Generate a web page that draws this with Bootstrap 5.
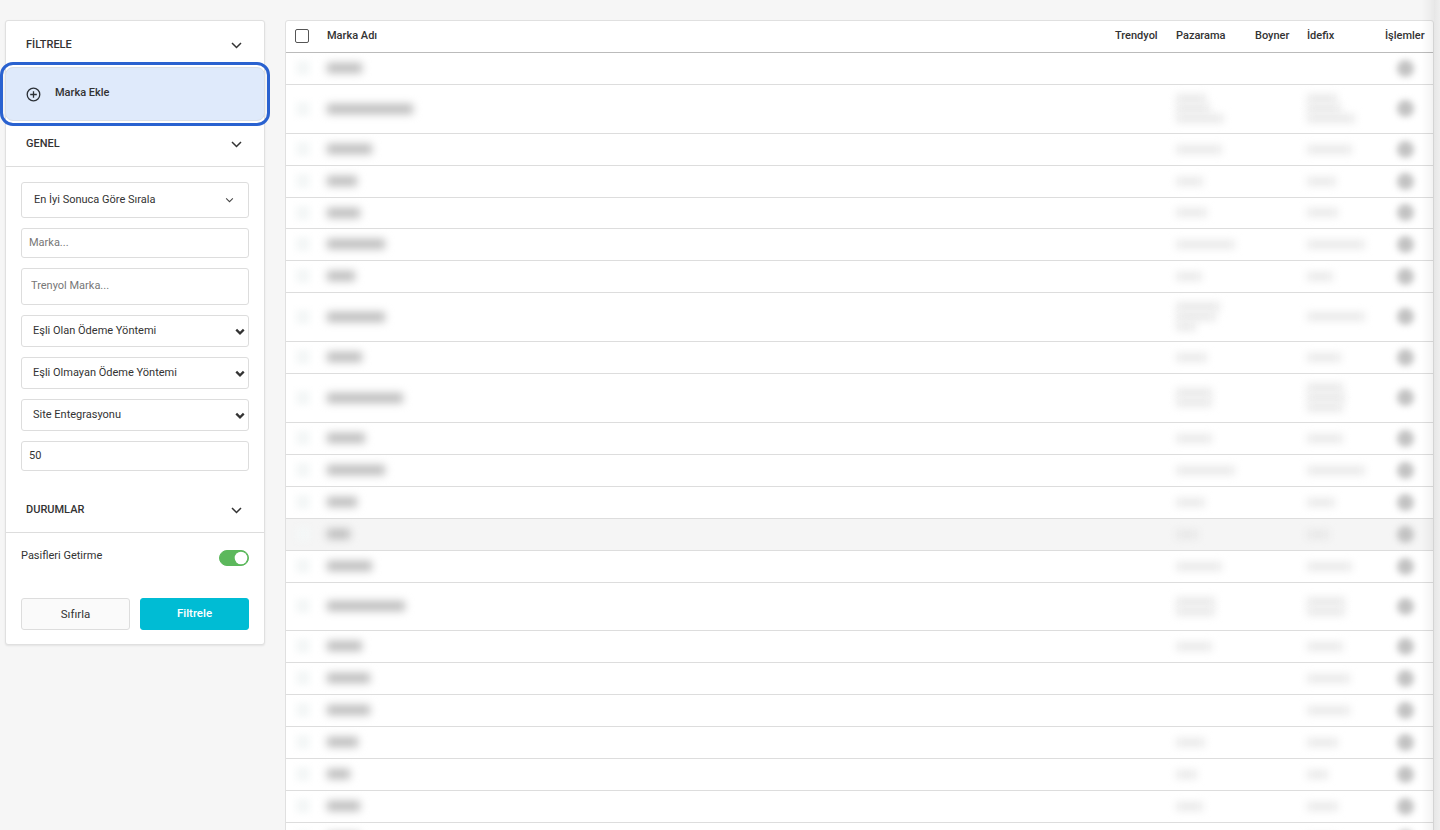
<!DOCTYPE html>
<html lang="en">
<head>
    <meta charset="UTF-8">
    <meta name="viewport" content="width=device-width, initial-scale=1.0">
    <title>Markalar</title>
    <link href="https://cdn.jsdelivr.net/npm/bootstrap@5.3.0/dist/css/bootstrap.min.css" rel="stylesheet">
    <style>
        html, body { height: 100%; overflow: hidden; }
        body { background: #f6f6f6; font-family: Roboto, "Liberation Sans", sans-serif; font-size: 11px; color: #333; }
        .page-wrap { height: 830px; padding: 20px 0 0 5px; gap: 20px; }
        .side-box { width: 260px; height: 625px; background: #fff; border: 1px solid #e0e0e0; border-radius: 3px; box-shadow: 0 1px 2px rgba(0,0,0,.08); flex-shrink: 0; position: relative; }
        .side-head { height: 46px; padding: 1px 22px 0 20px; font-size: 11px; font-weight: 500; color: #333; }
        .side-head.top-head { padding-top: 3px; }
        .side-head.lined { border-bottom: 1px solid #ddd; }
        .side-head.spaced { margin-top: 6px; }
        .add-brand { margin: 0 -1px; height: 54px; padding: 0 20px; background: #dfeafb; border: 1px solid #d9dfe8; outline: 3px solid #2a62d0; outline-offset: 2px; border-radius: 8px; font-size: 11px; font-weight: 500; gap: 14px; position: relative; z-index: 2; }
        .add-brand span { margin-top: -1px; }
        .filter-form { padding: 15px 15px 10px; }
        .filter-form .form-control, .filter-form .form-select { font-size: 11px; color: #333; border-color: #ddd; border-radius: 3px; box-shadow: none; min-height: 0; line-height: 1.2; }
        .filter-form .form-control::placeholder { color: #777; }
        .form-sort { height: 36px; padding: 0 12px; background-size: 9px 6px; background-position: right 14px center; background-image: url("data:image/svg+xml,%3csvg xmlns='http://www.w3.org/2000/svg' viewBox='0 0 16 10'%3e%3cpath fill='none' stroke='%23444' stroke-width='1.8' d='M2 2l6 6 6-6'/%3e%3c/svg%3e"); }
        .form-pick { height: 32px; padding: 0 11px; background-size: 10px 7px; background-position: right 3px center; background-image: url("data:image/svg+xml,%3csvg xmlns='http://www.w3.org/2000/svg' viewBox='0 0 16 10'%3e%3cpath fill='none' stroke='%23333' stroke-width='3.6' d='M2 2l6 6 6-6'/%3e%3c/svg%3e"); }
        .h-30 { height: 30px; padding: 0 7px 2px; }
        .h-37 { height: 37px; padding: 0 9px 2px; }
        .stack-10 { gap: 10px; }
        .status-row { padding: 15px 15px 0; height: 65px; }
        .status-row .form-check-input { width: 30px; height: 16px; margin: 2px 0 0; background-color: #5cb85c; border-color: #5cb85c; box-shadow: none; float: none; background-image: url("data:image/svg+xml,%3csvg xmlns='http://www.w3.org/2000/svg' viewBox='-4 -4 8 8'%3e%3ccircle r='3.6' fill='%23fff'/%3e%3c/svg%3e"); }
        .status-row .form-switch { padding: 0; min-height: 0; margin: 0; }
        .btn-row { padding: 0 15px; gap: 10px; }
        .btn-row .btn { flex: 1; height: 32px; padding: 0; font-size: 11.5px; border-radius: 3px; }
        .btn-row .btn-reset { background: #fafafa; border: 1px solid #ddd; color: #333; padding-top: 2px; }
        .btn-go { background: #00bcd4; border: 1px solid #00bcd4; color: #fff; font-weight: 500; }
        .list-box { flex: 1; background: #fff; border: 1px solid #e0e0e0; border-radius: 3px 3px 0 0; height: 830px; margin-right: 6px; overflow: hidden; }
        .brand-table { table-layout: fixed; margin: 0; width: 100%; }
        .brand-table th { height: 31px; padding: 0; font-size: 11px; font-weight: 500; color: #333; border-bottom: 1px solid #bbb; vertical-align: middle; white-space: nowrap; }
        .brand-table td { padding: 0; border-bottom: 1px solid #ddd; vertical-align: middle; background: transparent; }
        .brand-table tr.hovered td { background: #f5f5f5; }
        .brand-table .form-check-input { width: 14px; height: 14px; margin: 0 0 0 9px; float: none; border-color: #555; border-radius: 2px; display: block; }
        .blur-name, .blur-soft, .blur-dot, .blur-box { display: block; }
        .blur-name { height: 10px; background: #bcbcbc; filter: blur(4px); }
        .blur-soft { height: 7px; background: #e4e4e4; filter: blur(4px); margin: 3px 0; }
        .blur-dot { width: 17px; height: 17px; margin-left: 20px; border-radius: 50%; background: #c2c2c2; filter: blur(3px); }
        .blur-box { width: 14px; height: 14px; margin-left: 10px; background: #f4f7f7; filter: blur(3px); }
        .scroll-edge { position: fixed; top: 0; right: 0; width: 18px; height: 830px; pointer-events: none; background: linear-gradient(90deg, rgba(0,0,0,0), rgba(0,0,0,.05) 65%, #e6e6e6 66%, #eeeeee); }
    </style>
</head>
<body>
    <div class="d-flex page-wrap">
        <div class="side-box">
            <div class="side-head top-head d-flex align-items-center justify-content-between">
                <span>FİLTRELE</span>
                <svg width="11" height="7" viewBox="0 0 11 7"><path d="M1 1l4.500 4.500L10 1" fill="none" stroke="#333" stroke-width="1.500"/></svg>
            </div>
            <div class="add-brand d-flex align-items-center">
                <svg width="15" height="15" viewBox="0 0 15 15" class="flex-shrink-0"><circle cx="7.500" cy="7.500" r="6.300" fill="none" stroke="#2b3036" stroke-width="1.300"/><path d="M7.500 4.200v6.600M4.200 7.500h6.600" stroke="#2b3036" stroke-width="1.300"/></svg>
                <span>Marka Ekle</span>
            </div>
            <div class="side-head lined d-flex align-items-center justify-content-between">
                <span>GENEL</span>
                <svg width="11" height="7" viewBox="0 0 11 7"><path d="M1 1l4.500 4.500L10 1" fill="none" stroke="#333" stroke-width="1.500"/></svg>
            </div>
            <div class="filter-form d-flex flex-column stack-10">
                <select class="form-select form-sort"><option>En İyi Sonuca Göre Sırala</option></select>
                <input type="text" class="form-control h-30" placeholder="Marka...">
                <input type="text" class="form-control h-37" placeholder="Trenyol Marka...">
                <select class="form-select form-pick"><option>Eşli Olan Ödeme Yöntemi</option></select>
                <select class="form-select form-pick"><option>Eşli Olmayan Ödeme Yöntemi</option></select>
                <select class="form-select form-pick"><option>Site Entegrasyonu</option></select>
                <input type="text" class="form-control h-30" value="50">
            </div>
            <div class="side-head lined spaced d-flex align-items-center justify-content-between">
                <span>DURUMLAR</span>
                <svg width="11" height="7" viewBox="0 0 11 7"><path d="M1 1l4.500 4.500L10 1" fill="none" stroke="#333" stroke-width="1.500"/></svg>
            </div>
            <div class="status-row d-flex justify-content-between align-items-start">
                <span>Pasifleri Getirme</span>
                <div class="form-check form-switch"><input class="form-check-input" type="checkbox" checked></div>
            </div>
            <div class="btn-row d-flex">
                <button type="button" class="btn btn-reset">Sıfırla</button>
                <button type="button" class="btn btn-go">Filtrele</button>
            </div>
        </div>
        <div class="list-box">
            <table class="table brand-table">
                <colgroup>
                    <col style="width:33px"><col><col style="width:61px"><col style="width:79px"><col style="width:52px"><col style="width:78px"><col style="width:56px">
                </colgroup>
                <thead>
                    <tr>
                        <th><input class="form-check-input" type="checkbox"></th>
                        <th class="ps-2">Marka Adı</th>
                        <th class="ps-2">Trendyol</th>
                        <th class="ps-2">Pazarama</th>
                        <th class="ps-2">Boyner</th>
                        <th class="ps-2">İdefix</th>
                        <th class="ps-2">İşlemler</th>
                    </tr>
                </thead>
                <tbody id="brandRows"></tbody>
            </table>
        </div>
    </div>
    <div class="scroll-edge"></div>

    <script>
        // [row height, name width, pazarama widths, idefix widths]
        const rows = [
            [32, 35, [], []],
            [49, 86, [30, 34, 48], [30, 34, 48]],
            [32, 45, [46], [45]],
            [32, 30, [27], [29]],
            [31, 33, [31], [31]],
            [32, 58, [59], [58]],
            [32, 28, [26], [26]],
            [49, 58, [44, 40, 20], [58]],
            [32, 35, [31], [34]],
            [49, 76, [36, 36], [36, 38, 36]],
            [32, 38, [36], [36]],
            [32, 58, [59], [58]],
            [32, 30, [29], [28]],
            [32, 23, [22], [22]],
            [32, 45, [46], [45]],
            [48, 78, [39, 39], [38, 38]],
            [32, 35, [36], [36]],
            [32, 43, [], [43]],
            [32, 43, [], [43]],
            [32, 31, [29], [31]],
            [32, 23, [21], [21]],
            [32, 33, [27], [31]],
            [32, 33, [], [30]]
        ];

        function softBars(list) {
            return list.map(w => `<span class="blur-soft" style="width:${w}px"></span>`).join("");
        }

        document.getElementById("brandRows").innerHTML = rows.map((r, i) => `
            <tr class="${i === 13 ? "hovered" : ""}" style="height:${r[0]}px">
                <td><span class="blur-box"></span></td>
                <td class="ps-2"><span class="blur-name" style="width:${r[1]}px"></span></td>
                <td></td>
                <td class="ps-2">${softBars(r[2])}</td>
                <td></td>
                <td class="ps-2">${softBars(r[3])}</td>
                <td><span class="blur-dot"></span></td>
            </tr>`).join("");
    </script>
    <script src="https://cdn.jsdelivr.net/npm/bootstrap@5.3.0/dist/js/bootstrap.bundle.min.js"></script>
</body>
</html>
